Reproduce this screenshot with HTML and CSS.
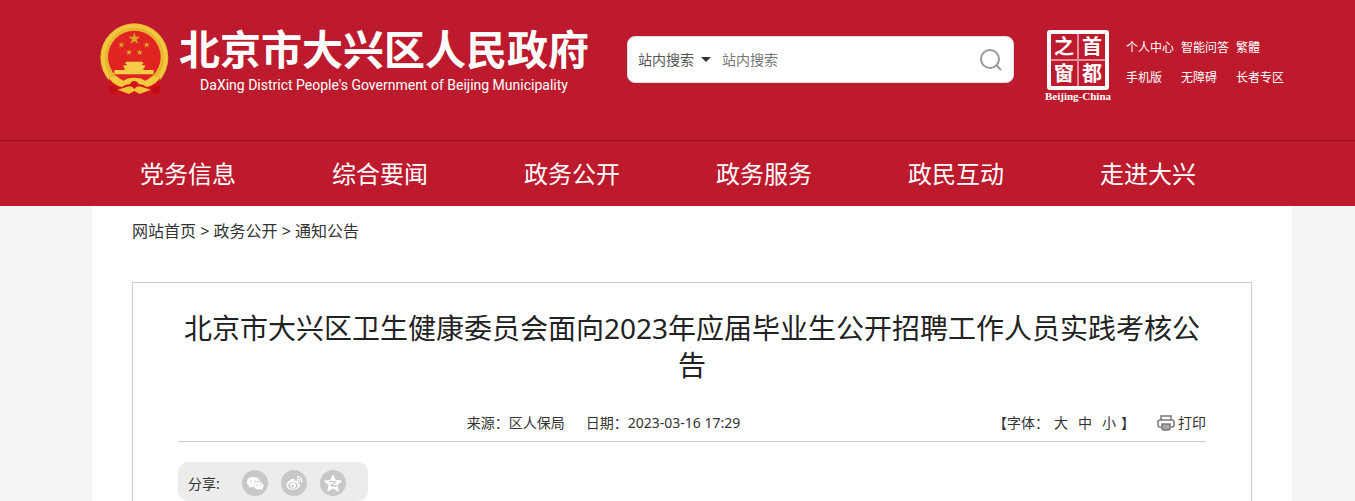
FILE: index.html
```html
<!DOCTYPE html>
<html lang="zh-CN">
<head>
  <meta charset="UTF-8">
  <meta name="viewport" content="width=device-width, initial-scale=1">
  <title>北京市大兴区人民政府</title>
  <link rel="stylesheet" href="styles.css">
</head>
<body>
  <header class="header">
    <div class="wrap top">
      <a class="logo" href="#">
        <svg class="emblem" viewBox="0 0 210 219" aria-hidden="true">
          <ellipse cx="103" cy="104" rx="102" ry="103" fill="#e9b530"/>
          <ellipse cx="103" cy="104" rx="94" ry="95" fill="none" stroke="#f3c840" stroke-width="10"/>
          <circle cx="103" cy="102" r="79" fill="#e02421"/>
          <g fill="#d9a62e">
            <path d="M103 28L107 41L121 41L110 49L114 63L103 54L92 63L96 49L85 41L99 41Z"/>
            <path d="M64 55L66 62L74 62L68 66L70 74L64 69L58 74L60 66L54 62L62 62Z"/>
            <path d="M140 55L142 62L150 62L144 66L146 74L140 69L134 74L136 66L130 62L138 62Z"/>
            <path d="M87 79L89 85L96 85L91 89L93 96L87 92L81 96L83 89L78 85L85 85Z"/>
            <path d="M119 79L121 85L128 85L123 89L125 96L119 92L113 96L115 89L110 85L117 85Z"/>
          </g>
          <path d="M79 116H127L131 122H126V127H136L133 136H129L131 141H161V154H43V141H73L76 136H72L70 127H80V122H74Z" fill="#f5ce45"/>
          <path d="M28 160L60 180L103 172L146 180L178 160L182 213Q160 219 134 212L72 212Q46 219 24 213Z" fill="#d3131b"/>
          <path d="M24 160Q38 166 48 160L70 174Q80 164 103 164Q126 164 136 174L158 160Q168 166 182 160Q170 186 140 192Q128 182 116 184Q112 174 103 174Q94 174 90 184Q78 182 66 192Q36 186 24 160Z" fill="#f4c93e"/>
          <path d="M53 200L82 191Q96 186 103 198Q110 186 124 191L153 200L119 213L103 204L87 213Z" fill="#f2c039"/>
          <path d="M27 187L53 198L42 212L25 208ZM179 187L153 198L164 212L181 208Z" fill="#b90d18"/>
        </svg>
        <span class="logo-text">
          <span class="logo-cn">北京市大兴区人民政府</span>
          <span class="logo-en">DaXing District People's Government of Beijing Municipality</span>
        </span>
      </a>

      <form class="search">
        <select class="search-type" aria-label="搜索范围">
          <option>站内搜索</option>
        </select>
        <span class="caret"></span>
        <input class="search-input" type="text" placeholder="站内搜索" aria-label="站内搜索">
        <button class="search-btn" type="button" aria-label="搜索">
          <svg viewBox="0 0 22 22" width="22" height="22" fill="none" stroke="#999" stroke-width="2">
            <circle cx="10" cy="10" r="9"/>
            <path d="M16 16L21 21"/>
          </svg>
        </button>
      </form>

      <a class="capital" href="#">
        <span class="seal"><span>之</span><span>首</span><span>窗</span><span>都</span></span>
        <span class="seal-en">Beijing-China</span>
      </a>

      <div class="quick">
        <a href="#">个人中心</a>
        <a href="#">智能问答</a>
        <a href="#">繁體</a>
        <a href="#">手机版</a>
        <a href="#">无障碍</a>
        <a href="#">长者专区</a>
      </div>
    </div>

    <nav class="nav">
      <div class="wrap nav-list">
        <a href="#">党务信息</a>
        <a href="#">综合要闻</a>
        <a href="#">政务公开</a>
        <a href="#">政务服务</a>
        <a href="#">政民互动</a>
        <a href="#">走进大兴</a>
      </div>
    </nav>
  </header>

  <main class="wrap main">
    <div class="crumb">
      <a href="#">网站首页</a> &gt; <a href="#">政务公开</a> &gt; <a href="#">通知公告</a>
    </div>

    <article class="article">
      <h1 class="title">北京市大兴区卫生健康委员会面向2023年应届毕业生公开招聘工作人员实践考核公告</h1>

      <div class="meta">
        <div class="source">
          <span>来源：区人保局</span>
          <span>日期：2023-03-16 17:29</span>
        </div>
        <div class="tools">
          <span>【字体：</span>
          <button type="button">大</button>
          <button type="button">中</button>
          <button type="button">小</button>
          <span>】</span>
        </div>
        <button class="print" type="button">
          <svg viewBox="0 0 18 16" width="18" height="16" fill="none" stroke="#777" stroke-width="1.500" aria-hidden="true">
            <path d="M4 5V1H14V5"/>
            <path d="M4 12H3Q1 12 1 10V7Q1 5 3 5H15Q17 5 17 7V10Q17 12 15 12H14"/>
            <path d="M5 9H13V13Q13 15 11 15H7Q5 15 5 13Z" fill="#aaa"/>
          </svg>
          打印
        </button>
      </div>

      <div class="share">
        <span class="share-label">分享:</span>
        <a href="#" aria-label="微信">
          <svg viewBox="0 0 26 26" width="26" height="26">
            <circle cx="13" cy="13" r="13" fill="#c8c8c8"/>
            <path d="M11 7C7 7 5 9 5 12C5 14 6 15 7 16L7 18L9 17Q11 17 12 17C11 13 14 11 18 11C17 8 14 7 11 7Z" fill="#fff"/>
            <path d="M17 12C14 12 12 13.500 12 16C12 18 14 19.500 17 19.500L19 19L21 20L20.500 18.500C21 18 21.500 17 21.500 16C21.500 13.500 19 12 17 12Z" fill="#fff"/>
            <g fill="#c8c8c8"><circle cx="9" cy="11" r=".8"/><circle cx="13" cy="11" r=".8"/><circle cx="15" cy="15" r=".7"/><circle cx="18.500" cy="15" r=".7"/></g>
          </svg>
        </a>
        <a href="#" aria-label="微博">
          <svg viewBox="0 0 26 26" width="26" height="26">
            <circle cx="13" cy="13" r="13" fill="#c8c8c8"/>
            <path d="M11 9C13 8.500 14 9.500 13.500 11C16 10 18 11 17 13C19 13.500 19.500 15 18.500 17C16 21 6 20.500 5.500 16C5.500 13 8.500 9.500 11 9Z" fill="#fff"/>
            <ellipse cx="12" cy="15.500" rx="4.700" ry="3.300" fill="#c8c8c8"/>
            <ellipse cx="12" cy="15.500" rx="3.200" ry="2.500" fill="#fff"/>
            <circle cx="11.500" cy="16" r="1.300" fill="#c8c8c8"/>
            <path d="M16 7C19 6.500 21.500 9 20.500 12.500M16 9.500C18 9 19 10.500 18.300 12" fill="none" stroke="#fff" stroke-width="1.300"/>
          </svg>
        </a>
        <a href="#" aria-label="QQ空间">
          <svg viewBox="0 0 26 26" width="26" height="26">
            <circle cx="13" cy="13" r="13" fill="#c8c8c8"/>
            <path d="M13 5L15.500 10.500L21.500 11L17 15.300L18.300 21L13 18L7.700 21L9 15.300L4.500 11L10.500 10.500Z" fill="#fff" stroke="#fff" stroke-linejoin="round"/>
            <path d="M9.500 11.500Q13 11 15.500 12L11 15.500Q14 16.500 17 15.500" fill="none" stroke="#c8c8c8" stroke-width="1.400"/>
          </svg>
        </a>
      </div>
    </article>
  </main>
</body>
</html>
```

FILE: styles.css
```css
* {
  box-sizing: border-box;
}

body {
  margin: 0;
  background: #f5f5f5;
  color: #333;
  font-family: "Noto Sans", "Noto Sans CJK SC", sans-serif;
  font-size: 14px;
}

a {
  color: inherit;
  text-decoration: none;
}

button,
input,
select {
  padding: 0;
  border: 0;
  background: none;
  color: inherit;
  font: inherit;
}

.wrap {
  margin: 0 63px 0 92px;
}

/* 头部 */
.header {
  background: #bd1a2d;
  color: #fff;
}

.top {
  display: flex;
  align-items: flex-start;
  height: 140px;
  padding: 23px 8px 0;
}

.logo {
  display: flex;
  flex: 1;
  white-space: nowrap;
}

.emblem {
  width: 70px;
  height: 73px;
  margin-right: 9px;
}

.logo-text {
  display: flex;
  flex-direction: column;
  align-items: center;
}

.logo-cn {
  font-size: 41px;
  font-weight: bold;
  line-height: 52px;
}

.logo-en {
  font-family: Roboto, Arial, sans-serif;
  font-size: 14px;
  line-height: 20px;
}

.search {
  display: flex;
  align-items: center;
  width: 387px;
  height: 47px;
  margin: 13px 30px 0 0;
  padding: 0 11px 0 10px;
  border: 1px solid #ddd;
  border-radius: 8px;
  background: #fff;
  color: #555;
}

.search-type {
  appearance: none;
  width: 56px;
}

.caret {
  margin: 0 11px 0 7px;
  border: 5px solid transparent;
  border-top-color: #333;
  border-bottom: 0;
}

.search-input {
  flex: 1;
  min-width: 0;
}

.search-input::placeholder {
  color: #777;
}

.search-btn {
  height: 22px;
}

.capital {
  display: flex;
  flex-direction: column;
  align-items: center;
  width: 68px;
  margin: 7px 14px 0 0;
}

.seal {
  display: grid;
  grid-template-columns: 1fr 1fr;
  gap: 2px;
  width: 62px;
  height: 60px;
  border: 4px solid #fff;
  border-radius: 3px;
  background: #e58e98;
}

.seal span {
  background: #bd1a2d;
  font-size: 20px;
  font-weight: bold;
  line-height: 25px;
  text-align: center;
}

.seal-en {
  font-family: "Liberation Serif", serif;
  font-size: 11px;
  font-weight: bold;
  line-height: 12px;
  white-space: nowrap;
}

.quick {
  display: grid;
  grid-template-columns: 55px 55px 48px;
  margin-top: 10px;
  font-size: 12px;
  line-height: 30px;
  white-space: nowrap;
}

.nav {
  border-top: 1px solid #970f1e;
}

.nav-list {
  display: flex;
}

.nav-list a {
  width: 16%;
  font-size: 24px;
  line-height: 65px;
  text-align: center;
}

/* 正文 */
.main {
  padding: 0 40px;
  background: #fff;
}

.crumb {
  padding: 10px 0 36px;
  font-size: 16px;
  line-height: 30px;
}

.article {
  padding: 27px 45px 0;
  border: 1px solid #ccc;
  border-bottom: 0;
}

.title {
  margin: 0;
  color: #222;
  font-size: 28px;
  font-weight: normal;
  line-height: 37px;
  text-align: center;
}

.meta {
  display: flex;
  align-items: center;
  height: 58px;
  padding-top: 20px;
  border-bottom: 1px solid #ccc;
  line-height: 20px;
}

.source {
  display: flex;
  flex: 1;
  justify-content: center;
  gap: 21px;
  padding-left: 36px;
}

.tools {
  display: flex;
  gap: 10px;
  margin-right: 22px;
}

.tools span:first-child {
  margin-right: -5px;
}

.tools span:last-child {
  margin-left: -5px;
}

.print {
  display: flex;
  align-items: center;
  gap: 3px;
}

.share {
  display: flex;
  align-items: center;
  gap: 13px;
  width: 190px;
  height: 39px;
  margin-top: 20px;
  padding: 2px 10px 0;
  border-radius: 10px;
  background: #ececec;
}

.share-label {
  width: 41px;
}

.share a {
  height: 26px;
}
```
